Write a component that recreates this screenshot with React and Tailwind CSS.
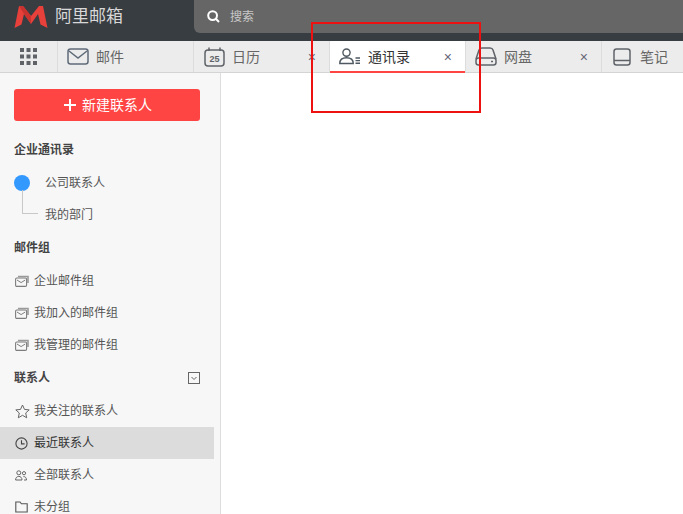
import React from 'react';

const FONT = '"Liberation Sans", "Noto Sans CJK SC", sans-serif';

function Logo() {
  return (
    <svg width="34" height="22" viewBox="0 0 34 22" className="shrink-0">
      <path d="M0.5 22 L5 0 L9 0 L17 10 L25 0 L29 0 L33.5 22 L26.5 18.5 L24 8 L17 18 L10 8 L7.5 18.5 Z" fill="#e8403a" />
      <path d="M5 0 L9 0 L17 10 L17 18 L10 8 Z" fill="#c9332f" />
    </svg>
  );
}

function GridIcon() {
  return (
    <svg width="17" height="17" viewBox="0 0 17 17" fill="#5f6368">
      {[0, 6.5, 13].map((y) =>
        [0, 6.5, 13].map((x) => <rect key={`${x}-${y}`} x={x} y={y} width="4" height="4" />)
      )}
    </svg>
  );
}

function MailIcon() {
  return (
    <svg width="22" height="17" viewBox="0 0 22 17" fill="none" stroke="#5f6b78" strokeWidth="1.5">
      <rect x="1" y="1" width="20" height="15" rx="2.5" />
      <path d="M2 3 L11 10 L20 3" />
    </svg>
  );
}

function CalendarIcon() {
  return (
    <svg width="21" height="20" viewBox="0 0 21 20" fill="none" stroke="#5f6368" strokeWidth="1.5">
      <rect x="1" y="3" width="19" height="16" rx="3" />
      <path d="M5 0.5 V4 M16 0.5 V4" />
      <text x="10.5" y="15" textAnchor="middle" fontSize="9" fontWeight="700" fill="#5f6368" stroke="none" fontFamily="Liberation Sans">25</text>
    </svg>
  );
}

function ContactIcon() {
  return (
    <svg width="22" height="17" viewBox="0 0 22 17" fill="none" stroke="#4f5962" strokeWidth="1.4">
      <circle cx="7.5" cy="4.6" r="3.6" />
      <path d="M0.8 15.5 C0.8 11.5 3.8 9.8 7.5 9.8 C11.2 9.8 14.2 11.5 14.2 15.5 Z" />
      <path d="M16.5 10 H21 M16.5 12.6 H21 M16.5 15.2 H21" />
    </svg>
  );
}

function DriveIcon() {
  return (
    <svg width="22" height="19" viewBox="0 0 22 19" fill="none" stroke="#5f6368" strokeWidth="1.5">
      <path d="M1 12 L4 3 C4.5 1.5 5.5 1 7 1 H15 C16.5 1 17.5 1.5 18 3 L21 12" />
      <rect x="1" y="11" width="20" height="7" rx="2.5" />
      <path d="M16 14.5 H18" />
    </svg>
  );
}

function NoteIcon() {
  return (
    <svg width="18" height="18" viewBox="0 0 18 18" fill="none" stroke="#5f6368" strokeWidth="1.5">
      <rect x="1" y="1" width="16" height="16" rx="2.5" />
      <path d="M1 12.5 H17" />
    </svg>
  );
}

function GroupIcon() {
  return (
    <svg width="14" height="12" viewBox="0 0 14 12" fill="none">
      <path d="M3 1.5 H13 V8" stroke="#9a9a9a" strokeWidth="1.6" />
      <rect x="0.6" y="3" width="11" height="8.4" rx="1.2" fill="#f7f7f7" stroke="#7d7d7d" strokeWidth="1.1" />
      <path d="M2 5 L6.1 7.6 L10.2 5" stroke="#7d7d7d" strokeWidth="1" />
    </svg>
  );
}

function StarIcon() {
  return (
    <svg width="15" height="15" viewBox="0 0 15 15" fill="none" stroke="#666" strokeWidth="1">
      <path d="M7.5 1 L9.5 5.4 L14.2 5.9 L10.7 9 L11.7 13.8 L7.5 11.3 L3.3 13.8 L4.3 9 L0.8 5.9 L5.5 5.4 Z" />
    </svg>
  );
}

function ClockIcon() {
  return (
    <svg width="13" height="13" viewBox="0 0 13 13" fill="none" stroke="#444" strokeWidth="1.1">
      <circle cx="6.5" cy="6.5" r="5.6" />
      <path d="M6.5 3.2 V6.9 H9.6" />
    </svg>
  );
}

function PeopleIcon() {
  return (
    <svg width="12" height="11" viewBox="0 0 12 11" fill="none" stroke="#666" strokeWidth="1">
      <circle cx="3.8" cy="2.8" r="2" />
      <circle cx="9" cy="3.2" r="1.6" />
      <path d="M0.6 10 C0.6 7.6 2 6.4 3.8 6.4 C5.6 6.4 7 7.6 7 10 Z" />
      <path d="M8.4 6.6 C10.2 6.4 11.5 7.8 11.5 10 H9" />
    </svg>
  );
}

function FolderIcon() {
  return (
    <svg width="13" height="12" viewBox="0 0 13 12" fill="none" stroke="#555" strokeWidth="1.1">
      <path d="M0.8 1 H5 L6.4 2.8 H12.2 V11 H0.8 Z" />
    </svg>
  );
}

function Tab({ icon, label, active, closable }) {
  return (
    <div className={`relative w-[136px] shrink-0 h-full flex items-center pl-[9px] border-r border-[#dcdcdc] ${active ? 'bg-white' : ''}`}>
      <div className="flex items-center gap-[7px]">
        <span className="w-[22px] flex justify-center">{icon}</span>
        <span className={`text-[14px] pt-[1px] ${active ? 'text-[#333]' : 'text-[#666]'}`}>{label}</span>
      </div>
      {closable && <span className="absolute right-[13px] top-[7px] text-[14px] leading-[18px] text-[#667]">×</span>}
      {active && <span className="absolute left-0 right-0 bottom-[-1px] h-[2px] bg-[#ff4444]" />}
    </div>
  );
}

function Section({ label, children }) {
  return (
    <div className="h-[34px] pb-[1px] flex items-center justify-between pl-[14px] pr-[20px] text-[12px] font-bold text-[#444]">
      <span>{label}</span>
      {children}
    </div>
  );
}

function Item({ icon, label, active }) {
  return (
    <div className={`h-[32px] w-[214px] flex items-center pl-[15px] text-[12px] text-[#555] ${active ? 'bg-[#dcdcdc]' : ''}`}>
      <span className="w-[19px] flex items-center">{icon}</span>
      <span className={active ? 'text-[#333]' : ''}>{label}</span>
    </div>
  );
}

export default function App() {
  return (
    <div className="relative h-[514px] w-[683px] overflow-hidden bg-white" style={{ fontFamily: FONT }}>
      {/* top bar */}
      <header className="h-[41px] bg-[#383d42] flex">
        <div className="w-[194px] h-[33px] shrink-0 flex items-center pl-[14px] gap-[7px]">
          <Logo />
          <span className="text-[17px] text-[#d8d8d8]">阿里邮箱</span>
        </div>
        <div className="flex-1 h-[33px] bg-[#666666] rounded-bl-[6px] flex items-center pl-[13px] gap-[10px]">
          <svg width="13" height="13" viewBox="0 0 13 13" fill="none" stroke="#fff" strokeWidth="2">
            <circle cx="5.6" cy="5.6" r="4.4" />
            <path d="M8.8 8.8 L12 12" />
          </svg>
          <span className="text-[12px] pt-[1px] text-[#c8c8c8]">搜索</span>
        </div>
      </header>

      {/* tabs */}
      <nav className="h-[32px] bg-[#ececec] border-b border-[#d4d4d4] flex">
        <div className="w-[58px] shrink-0 h-full flex items-center justify-center border-r border-[#dcdcdc]">
          <GridIcon />
        </div>
        <Tab icon={<MailIcon />} label="邮件" />
        <Tab icon={<CalendarIcon />} label="日历" closable />
        <Tab icon={<ContactIcon />} label="通讯录" active closable />
        <Tab icon={<DriveIcon />} label="网盘" closable />
        <Tab icon={<NoteIcon />} label="笔记" />
      </nav>

      {/* sidebar */}
      <aside className="w-[221px] h-[441px] bg-[#f7f7f7] border-r border-[#dddddd] overflow-hidden pt-[16px]">
        <button className="ml-[14px] w-[186px] h-[32px] pl-[2px] rounded-[3px] bg-[#ff4444] flex items-center justify-center gap-[6px] text-white text-[14px]">
          <svg width="12" height="12" viewBox="0 0 12 12" stroke="#fff" strokeWidth="2">
            <path d="M6 0 V12 M0 6 H12" />
          </svg>
          <span>新建联系人</span>
        </button>

        <div className="mt-[12px] -mb-[1px]">
          <Section label="企业通讯录" />
        </div>
        <div className="relative pt-[1px] text-[12px] text-[#555]">
          <div className="h-[32px] flex items-center pl-[14px]">
            <span className="w-[16px] h-[16px] rounded-full bg-[#3399ff]" />
            <span className="ml-[15px]">公司联系人</span>
          </div>
          <div className="h-[32px] flex items-center pl-[45px]">我的部门</div>
          <span className="absolute left-[22px] top-[24px] w-[16px] h-[24px] border-l border-b border-[#c8c8c8]" />
        </div>

        <Section label="邮件组" />
        <Item icon={<GroupIcon />} label="企业邮件组" />
        <Item icon={<GroupIcon />} label="我加入的邮件组" />
        <Item icon={<GroupIcon />} label="我管理的邮件组" />

        <Section label="联系人">
          <svg width="12" height="12" viewBox="0 0 12 12" fill="none" stroke="#666">
            <rect x="0.5" y="0.5" width="11" height="11" />
            <path d="M3.5 5 L6 7.5 L8.5 5" />
          </svg>
        </Section>
        <Item icon={<StarIcon />} label="我关注的联系人" />
        <Item icon={<ClockIcon />} label="最近联系人" active />
        <Item icon={<PeopleIcon />} label="全部联系人" />
        <Item icon={<FolderIcon />} label="未分组" />
      </aside>

      {/* red annotation drawn over the screenshot */}
      <div className="absolute left-[311px] top-[22px] w-[170px] h-[91px] border-2 border-[#ee1111]" />
    </div>
  );
}
